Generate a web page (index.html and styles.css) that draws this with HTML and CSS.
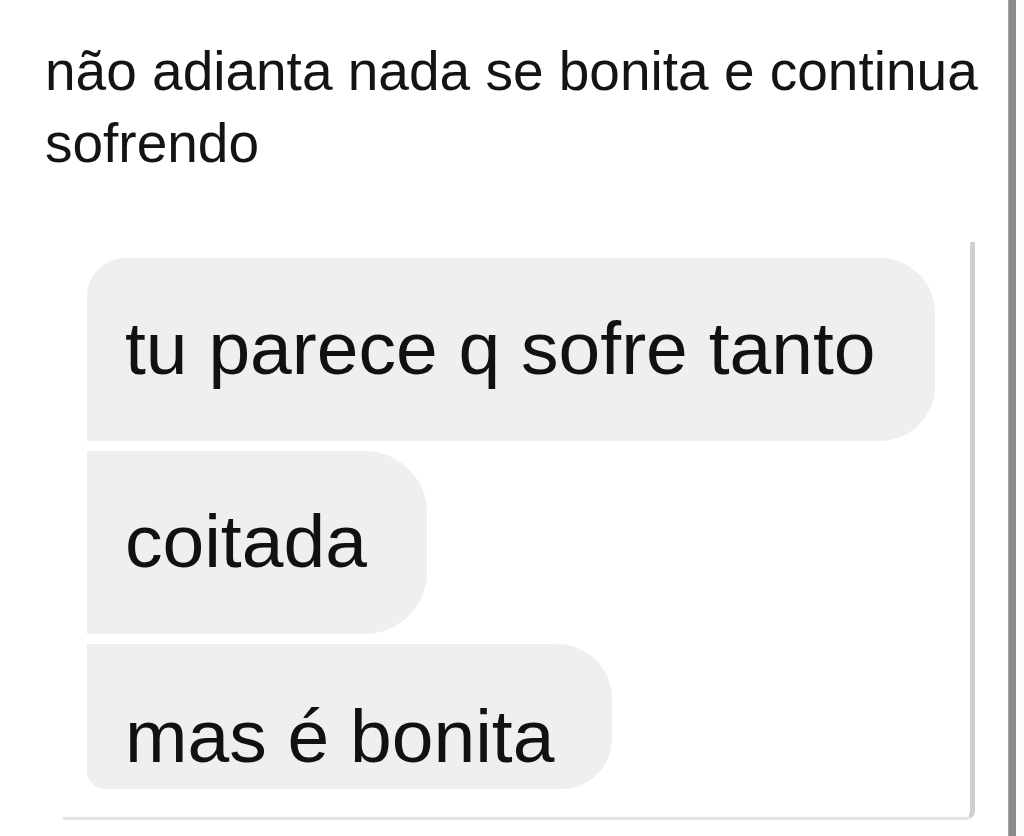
FILE: index.html
```html
<!DOCTYPE html>
<html lang="pt">
<head>
<meta charset="utf-8">
<title>não adianta nada se bonita</title>
<link rel="stylesheet" href="styles.css">
</head>
<body>
<div class="page">
  <main class="content">
    <p class="tweet-text">não adianta nada se bonita e continua sofrendo</p>
    <section class="card">
      <div class="bubbles">
        <div class="bubble bubble-first">tu parece q sofre tanto</div>
        <div class="bubble bubble-middle">coitada</div>
        <div class="bubble bubble-last">mas é bonita</div>
      </div>
    </section>
  </main>
  <div class="rule"></div>
  <div class="edge"></div>
</div>
</body>
</html>
```

FILE: styles.css
```css
html, body {
  margin: 0;
  padding: 0;
  background: #ffffff;
}

body {
  width: 1024px;
  height: 836px;
  overflow: hidden;
  font-family: "Liberation Sans", Arial, sans-serif;
  color: #121212;
}

.page {
  display: flex;
  height: 836px;
}

.content {
  flex: 1;
  padding: 35px 0 0 45px;
  box-sizing: border-box;
}

.tweet-text {
  margin: 0;
  font-size: 55px;
  line-height: 72px;
  color: #141414;
}

.card {
  margin: 63px 0 0 18px;
  width: 912px;
  box-sizing: border-box;
  padding: 16px 0 28px 24px;
  border-right: 5px solid #cfcfcf;
  border-bottom: 3px solid #e2e2e2;
  border-bottom-right-radius: 9px;
  background: linear-gradient(#ffffff, #ffffff);
}

.bubbles {
  display: flex;
  flex-direction: column;
  align-items: flex-start;
  gap: 10px;
}

.bubble {
  background: #efefef;
  font-size: 75px;
  line-height: 84px;
  color: #111111;
  padding: 48px 56px 51px 38px;
  white-space: nowrap;
}

.bubble-first {
  padding-right: 60px;
  border-radius: 38px 55px 55px 0;
}

.bubble-middle {
  padding-right: 60px;
  border-radius: 0 62px 62px 0;
}

.bubble-last {
  height: 145px;
  box-sizing: border-box;
  padding: 50px 58px 11px 38px;
  border-radius: 0 55px 50px 18px;
}

.rule {
  width: 8px;
  flex: none;
  background: #8b8b8b;
  border-left: 1px solid #a5a5a5;
  box-sizing: border-box;
}

.edge {
  width: 8px;
  flex: none;
  background: #fbfbfb;
}
```
